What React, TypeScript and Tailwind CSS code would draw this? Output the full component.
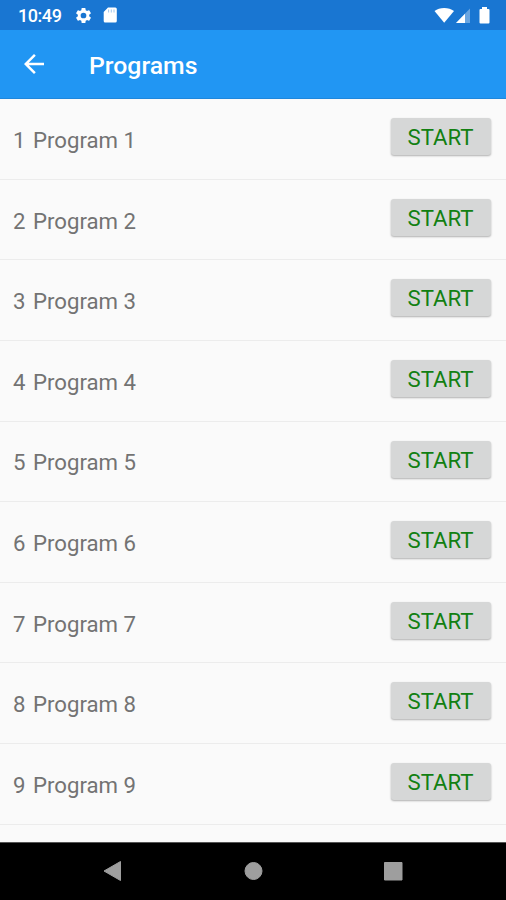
const programs = [1, 2, 3, 4, 5, 6, 7, 8, 9].map((id) => ({ id, name: `Program ${id}` }));

const StatusBar = () => {
  return (
    <div className="h-[30px] shrink-0 bg-[#1976d2] flex items-center pl-[18px] pr-[16.5px] text-white">
      <span className="text-[18px] leading-[30px] font-medium tracking-[-0.45px] w-[56px] pt-[2px]">10:49</span>
      <svg className="w-[19px] h-[19px]" viewBox="0 0 24 24" fill="currentColor">
        <path d="M19.14 12.94c.04-.3.06-.61.06-.94s-.02-.64-.07-.94l2.03-1.58a.49.49 0 0 0 .12-.61l-1.92-3.32a.49.49 0 0 0-.59-.22l-2.39.96a7 7 0 0 0-1.62-.94l-.36-2.54a.48.48 0 0 0-.48-.41h-3.84a.48.48 0 0 0-.47.41l-.36 2.54a7 7 0 0 0-1.62.94l-2.39-.96a.49.49 0 0 0-.59.22L2.74 8.87a.48.48 0 0 0 .12.61l2.03 1.58a6 6 0 0 0 0 1.88l-2.03 1.58a.49.49 0 0 0-.12.61l1.92 3.32c.12.22.37.29.59.22l2.39-.96c.5.38 1.03.7 1.62.94l.36 2.54c.05.24.24.41.48.41h3.84c.24 0 .44-.17.47-.41l.36-2.54a7 7 0 0 0 1.62-.94l2.39.96c.22.08.47 0 .59-.22l1.92-3.32a.48.48 0 0 0-.12-.61zM12 15.6a3.6 3.6 0 1 1 0-7.2 3.6 3.6 0 0 1 0 7.2z" />
      </svg>
      <svg className="w-[14px] h-[16px] ml-[10px]" viewBox="0 0 14 16">
        <path d="M5 .5h7.3A1.5 1.5 0 0 1 13.8 2v12a1.5 1.5 0 0 1-1.5 1.5h-10A1.5 1.5 0 0 1 .7 14V5z" fill="currentColor" />
        <path d="M5.6 2.5v3M8.3 2.5v3M11 2.5v3" stroke="#1976d2" strokeWidth="1" opacity=".4" />
      </svg>
      <svg className="w-[21px] h-[17px] ml-auto" viewBox="0 0 21 17" fill="currentColor">
        <path d="M10.2 15.8.5 4Q4.5 1 10.2 1T20 4z" />
      </svg>
      <svg className="w-[16px] h-[17px] mt-px" viewBox="0 0 16 17" fill="currentColor">
        <path d="M1 16 15 1.5V16z" opacity=".35" />
        <path d="M1 16 10 6.7V16z" />
      </svg>
      <svg className="w-[11px] h-[17px] ml-[8px]" viewBox="0 0 11 17" fill="currentColor">
        <path d="M3 0h5v2h1.5a1 1 0 0 1 1 1v12.5a1 1 0 0 1-1 1h-8a1 1 0 0 1-1-1V3a1 1 0 0 1 1-1H3z" />
      </svg>
    </div>
  );
};

const AppBar = () => {
  return (
    <header className="h-[69px] shrink-0 bg-[#2196f3] border-b border-[#1f87dc] flex items-center pl-[19px] text-white">
      <svg className="w-[30px] h-[30px]" viewBox="0 0 24 24" fill="currentColor">
        <path d="M20 11H7.83l5.59-5.59L12 4l-8 8 8 8 1.41-1.41L7.83 13H20v-2z" />
      </svg>
      <h1 className="ml-[40px] pt-[4.5px] text-[24.8px] leading-8 font-medium">Programs</h1>
    </header>
  );
};

const NavBar = () => {
  return (
    <nav className="h-[58.5px] shrink-0 bg-black border-t border-[#555] text-[#9e9e9e]">
      <svg className="block w-[506px] h-[57px]" viewBox="0 0 506 57" fill="currentColor" stroke="currentColor" strokeLinejoin="round">
        <path d="M104 28 120.5 18.500v19z" />
        <circle cx="253.5" cy="28" r="8.5" />
        <rect x="384.5" y="19.5" width="17.5" height="17.5" />
      </svg>
    </nav>
  );
};

export default function App() {
  return (
    <div className="w-[506px] h-[900px] overflow-hidden flex flex-col bg-[#fafafa] font-[Roboto,sans-serif]">
      <StatusBar />
      <AppBar />
      <main className="flex-1 min-h-0 overflow-hidden">
        {programs.map((program) => (
          <div key={program.id} className="h-[80.65px] border-b border-[#ececec] flex justify-between pl-[13px] pr-[15px]">
            <div className="flex gap-[7.5px] pt-[24.9px] text-[22.2px] leading-8 text-[#737373]">
              <span>{program.id}</span>
              <span>{program.name}</span>
            </div>
            <button className="mt-[19px] w-[100px] h-[37px] pt-px pr-px rounded-[3px] bg-[#d6d7d7] text-[22.2px] leading-[37px] text-[#128012] shadow-[0_1px_2px_rgba(0,0,0,0.3)]">
              START
            </button>
          </div>
        ))}
      </main>
      <NavBar />
    </div>
  );
}
